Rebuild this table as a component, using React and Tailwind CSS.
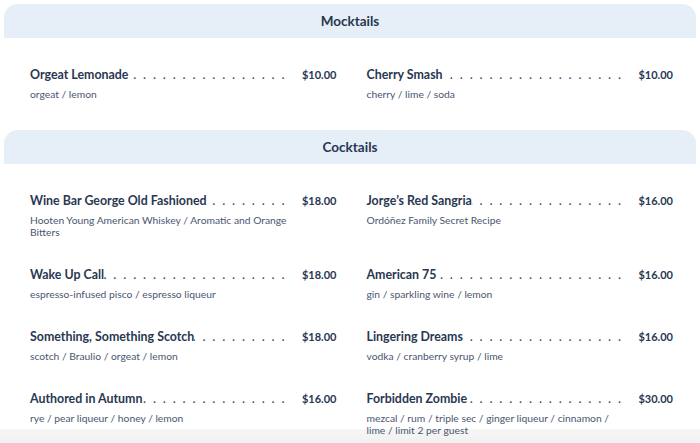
import React from "react";

const mocktails = [
  { name: "Orgeat Lemonade", price: "$10.00", desc: "orgeat / lemon" },
  { name: "Cherry Smash", price: "$10.00", desc: "cherry / lime / soda" },
];

const cocktails = [
  { name: "Wine Bar George Old Fashioned", price: "$18.00", desc: "Hooten Young American Whiskey / Aromatic and Orange Bitters" },
  { name: "Jorge’s Red Sangria", price: "$16.00", desc: "Ordóñez Family Secret Recipe" },
  { name: "Wake Up Call", price: "$18.00", desc: "espresso-infused pisco / espresso liqueur" },
  { name: "American 75", price: "$16.00", desc: "gin / sparkling wine / lemon" },
  { name: "Something, Something Scotch", price: "$18.00", desc: "scotch / Braulio / orgeat / lemon" },
  { name: "Lingering Dreams", price: "$16.00", desc: "vodka / cranberry syrup / lime" },
  { name: "Authored in Autumn", price: "$16.00", desc: "rye / pear liqueur / honey / lemon" },
  { name: "Forbidden Zombie", price: "$30.00", desc: "mezcal / rum / triple sec / ginger liqueur / cinnamon / lime / limit 2 per guest" },
];

const dots = Array.from({ length: 40 });

function Item({ item }) {
  return (
    <div>
      <div className="flex items-baseline h-[18px] leading-[18px] text-[12.4px] font-bold text-[#293751]">
        <span className="whitespace-nowrap">{item.name}</span>
        <span className="flex-1 flex justify-end overflow-hidden whitespace-nowrap min-w-0 font-normal text-[13px] text-[#3a4763]">
          {dots.map((_, i) => (
            <span key={i} className="inline-block w-[9.9px] shrink-0 text-center">.</span>
          ))}
        </span>
        <span className="ml-[14px] text-[11px] whitespace-nowrap">{item.price}</span>
      </div>
      <div className="mt-[5px] max-w-[259px] text-[10.3px] leading-[12px] text-[#4b5670]">{item.desc}</div>
    </div>
  );
}

function Section({ title, items }) {
  return (
    <section>
      <div className="h-[34px] rounded-t-[14px] bg-[#e6eef8] flex items-center justify-center text-[13.5px] font-bold text-[#293751]">
        {title}
      </div>
      <div className="grid grid-cols-2 gap-x-[30px] gap-y-[27px] pl-[26px] pr-[23px] py-[27px]">
        {items.map((it) => (
          <Item key={it.name} item={it} />
        ))}
      </div>
    </section>
  );
}

export default function App() {
  return (
    <div className="relative w-[700px] h-[443px] overflow-hidden bg-white font-['Lato',sans-serif]">
      <div className="pointer-events-none absolute left-0 right-0 bottom-0 h-[14px] bg-gradient-to-b from-[#f6f6f6] to-[#f1f1f1]" />
      <div className="relative px-[4px] pt-[4px] flex flex-col gap-[3px]">
        <Section title="Mocktails" items={mocktails} />
        <Section title="Cocktails" items={cocktails} />
      </div>
    </div>
  );
}
